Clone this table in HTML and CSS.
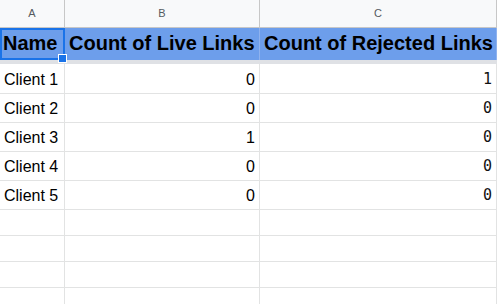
FILE: index.html
```html
<!DOCTYPE html>
<html>
<head>
<meta charset="utf-8">
<link rel="stylesheet" href="styles.css">
</head>
<body>
<div class="sheet">
  <div class="row colhead">
    <div class="cell">A</div>
    <div class="cell">B</div>
    <div class="cell">C</div>
  </div>
  <div class="row head">
    <div class="cell selected">Name<span class="sel-box"></span><span class="handle"></span></div>
    <div class="cell">Count of Live Links</div>
    <div class="cell">Count of Rejected Links</div>
  </div>
  <div class="freeze"></div>
  <div class="row data first">
    <div class="cell">Client 1</div>
    <div class="cell num">0</div>
    <div class="cell mono">1</div>
  </div>
  <div class="row data">
    <div class="cell">Client 2</div>
    <div class="cell num">0</div>
    <div class="cell mono">0</div>
  </div>
  <div class="row data">
    <div class="cell">Client 3</div>
    <div class="cell num">1</div>
    <div class="cell mono">0</div>
  </div>
  <div class="row data">
    <div class="cell">Client 4</div>
    <div class="cell num">0</div>
    <div class="cell mono">0</div>
  </div>
  <div class="row data">
    <div class="cell">Client 5</div>
    <div class="cell num">0</div>
    <div class="cell mono">0</div>
  </div>
  <div class="row empty"><div class="cell"></div><div class="cell"></div><div class="cell"></div></div>
  <div class="row empty"><div class="cell"></div><div class="cell"></div><div class="cell"></div></div>
  <div class="row empty"><div class="cell"></div><div class="cell"></div><div class="cell"></div></div>
  <div class="row empty"><div class="cell"></div><div class="cell"></div><div class="cell"></div></div>
</div>
</body>
</html>
```

FILE: styles.css
```css
html, body {
  margin: 0;
  padding: 0;
  background: #ffffff;
  overflow: hidden;
}

.sheet {
  width: 497px;
  font-family: "Liberation Sans", Arial, sans-serif;
  color: #000;
}

.row {
  display: grid;
  grid-template-columns: 65px 195px 1fr;
}

.cell {
  box-sizing: border-box;
  border-right: 1px solid #e2e3e3;
  border-bottom: 1px solid #e2e3e3;
  white-space: nowrap;
  overflow: hidden;
  position: relative;
}

.colhead .cell {
  height: 28px;
  background: #f8f9fa;
  border-right: 1px solid #c7c7c7;
  border-bottom: 1px solid #c7c7c7;
  color: #555a60;
  font-size: 11px;
  display: flex;
  align-items: center;
  justify-content: center;
  padding-bottom: 1px;
}

.head .cell {
  height: 32px;
  background: #6d9eeb;
  border-right: 1px solid #8fb2ee;
  border-bottom: none;
  font-weight: bold;
  font-size: 20px;
  display: flex;
  align-items: flex-end;
  padding: 0 3px 5px 4px;
  overflow: visible;
}

.head .cell.selected {
  padding-left: 3px;
  z-index: 2;
}

.sel-box {
  position: absolute;
  left: 0;
  top: 0;
  right: -1px;
  bottom: 0;
  border: 2px solid #1a73e8;
  pointer-events: none;
}

.handle {
  position: absolute;
  left: 58px;
  top: 26px;
  width: 7px;
  height: 7px;
  background: #1a73e8;
  border: 1px solid #ffffff;
}

.freeze {
  height: 4px;
  background: #dfe1e5;
}

.data .cell {
  height: 29px;
  font-size: 16px;
  display: flex;
  align-items: flex-end;
  padding: 0 4px 4px 4px;
}

.data.first .cell {
  height: 30px;
}

.data .cell.num {
  justify-content: flex-end;
}

.data .cell.mono {
  justify-content: flex-end;
  font-family: "DejaVu Sans Mono", monospace;
  font-size: 15px;
  color: #111;
  padding-bottom: 5px;
  padding-right: 4px;
}

.empty .cell {
  height: 26px;
}
```
